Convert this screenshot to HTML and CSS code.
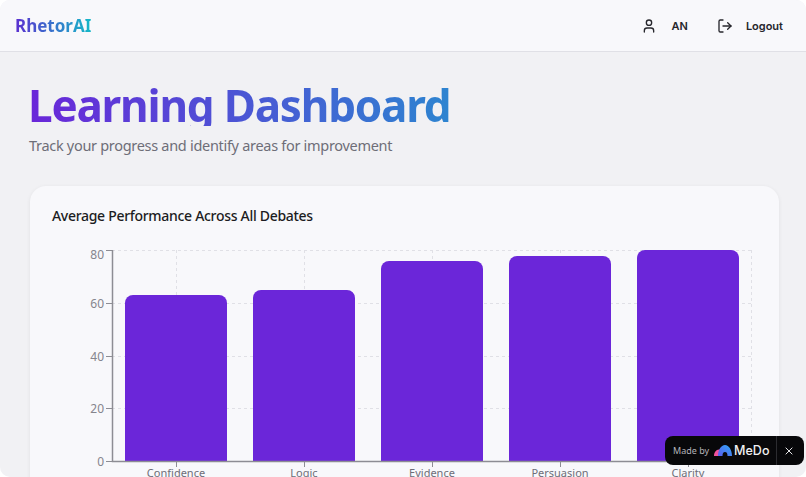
FILE: index.html
```html
<!DOCTYPE html>
<html lang="en">
<head>
  <meta charset="UTF-8" />
  <title>RhetorAI - Learning Dashboard</title>
  <link rel="stylesheet" href="styles.css">
</head>
<body>
  <div class="app">
    <header class="navbar">
      <a class="logo">RhetorAI</a>
      <nav class="nav-actions">
        <div class="nav-item user">
          <svg class="icon" viewBox="0 0 24 24"><circle cx="12" cy="7" r="4"/><path d="M19 21v-2a4 4 0 0 0-4-4H9a4 4 0 0 0-4 4v2"/></svg>
          <span>AN</span>
        </div>
        <div class="nav-item logout">
          <svg class="icon" viewBox="0 0 24 24"><path d="M9 21H5a2 2 0 0 1-2-2V5a2 2 0 0 1 2-2h4"/><path d="m16 17 5-5-5-5"/><path d="M21 12H9"/></svg>
          <span>Logout</span>
        </div>
      </nav>
    </header>

    <main class="content">
      <h1 class="page-title">Learning Dashboard</h1>
      <p class="page-sub">Track your progress and identify areas for improvement</p>

      <section class="card">
        <h2 class="card-title">Average Performance Across All Debates</h2>
        <svg class="chart" viewBox="52 240 705 240" width="705" height="240">
          <g class="grid">
            <path d="M112 250.5H751M112 303.5H751M112 356.5H751M112 408.5H751"/>
            <path d="M176.5 250V461M304.5 250V461M432.5 250V461M560.5 250V461M688.5 250V461M751.5 250V461"/>
          </g>
          <g class="bars">
            <path d="M125 461V303a8 8 0 0 1 8-8h86a8 8 0 0 1 8 8V461z"/>
            <path d="M253 461V298a8 8 0 0 1 8-8h86a8 8 0 0 1 8 8V461z"/>
            <path d="M381 461V269a8 8 0 0 1 8-8h86a8 8 0 0 1 8 8V461z"/>
            <path d="M509 461V264a8 8 0 0 1 8-8h86a8 8 0 0 1 8 8V461z"/>
            <path d="M637 461V258a8 8 0 0 1 8-8h86a8 8 0 0 1 8 8V461z"/>
          </g>
          <g class="axis">
            <path d="M112.500 250V461.500H751"/>
            <path d="M106 250.500H112M106 303.500H112M106 356.500H112M106 408.500H112M106 461.500H112"/>
            <path d="M176.500 462V467M304.500 462V467M432.500 462V467M560.500 462V467M688.500 462V467"/>
          </g>
          <g class="y-labels">
            <text x="104" y="259">80</text>
            <text x="104" y="308">60</text>
            <text x="104" y="361">40</text>
            <text x="104" y="413">20</text>
            <text x="104" y="466">0</text>
          </g>
          <g class="x-labels">
            <text x="176" y="477">Confidence</text>
            <text x="304" y="477">Logic</text>
            <text x="432" y="477">Evidence</text>
            <text x="560" y="477">Persuasion</text>
            <text x="688" y="477">Clarity</text>
          </g>
        </svg>
      </section>
    </main>

    <div class="badge">
      <div class="badge-main">
        <span class="made-by">Made by</span>
        <svg class="medo-mark" viewBox="0 0 18 11">
          <defs>
            <linearGradient id="medoArch" x1="0" y1="1" x2="1" y2="0">
              <stop offset="0" stop-color="#5b5cf0"/>
              <stop offset="1" stop-color="#2ea8f5"/>
            </linearGradient>
          </defs>
          <path class="medo-pink" d="M0 11C0 7.500 2 4.500 5 4.500 6 4.500 7 5 7.500 5.500 6.500 7 6 9 6 11z"/>
          <path fill="url(#medoArch)" d="M4 11C4 5 7 0 11 0 15 0 18 5 18 11H13.500C13.500 8.500 12.800 7 11 7 9.200 7 8.500 8.500 8.500 11z"/>
        </svg>
        <span class="medo-name">MeDo</span>
      </div>
      <button class="badge-close">
        <svg viewBox="0 0 12 12"><path d="M2 2 10 10M10 2 2 10"/></svg>
      </button>
    </div>
  </div>
</body>
</html>
```

FILE: styles.css
```css
* {
  box-sizing: border-box;
}

html, body {
  margin: 0;
  height: 100%;
  overflow: hidden;
  background: #fff;
}

.app {
  position: relative;
  height: 477px;
  overflow: hidden;
  border-radius: 10px;
  background: #f1f1f4;
  font-family: "Noto Sans", sans-serif;
  color: #1c1c22;
}

.navbar {
  display: flex;
  align-items: center;
  justify-content: space-between;
  height: 52px;
  padding: 0 23px 0 15px;
  background: #f8f8fb;
  border-bottom: 1px solid #e0e0e6;
}

.logo {
  font-size: 17px;
  font-weight: 700;
  background: linear-gradient(to right, #5b2fd0, #14b8c8);
  -webkit-background-clip: text;
  background-clip: text;
  color: transparent;
}

.nav-actions {
  display: flex;
  align-items: center;
  gap: 29px;
}

.nav-item {
  display: flex;
  align-items: center;
  gap: 15px;
  font-family: Inter, sans-serif;
  font-size: 11px;
  font-weight: 600;
  color: #26262c;
}

.logout {
  gap: 13px;
}

.icon {
  width: 16px;
  height: 16px;
  fill: none;
  stroke: #26262c;
  stroke-width: 2;
  stroke-linecap: round;
  stroke-linejoin: round;
}

.content {
  padding: 26px 27px 0 30px;
}

/* line-height bigger than the box, the gradient stops at the box so the descender gets cut */
.page-title {
  display: inline-block;
  height: 48px;
  margin: 0 0 0 -2px;
  font-size: 44px;
  line-height: 54px;
  letter-spacing: -1.2px;
  font-weight: 700;
  background: linear-gradient(to right, #6a26d9, #2d84d0);
  -webkit-background-clip: text;
  background-clip: text;
  color: transparent;
}

.page-sub {
  margin: 7px 0 0 -1px;
  font-size: 14.5px;
  line-height: 22px;
  letter-spacing: -0.3px;
  color: #6e6e78;
}

.card {
  height: 320px;
  margin-top: 30px;
  padding: 19px 22px;
  background: #f8f8fb;
  border-radius: 16px;
  box-shadow: 0 1px 4px rgba(0, 0, 0, 0.07);
}

.card-title {
  margin: 0;
  font-size: 14px;
  line-height: 22px;
  letter-spacing: -0.3px;
  font-weight: 500;
  color: #1c1c22;
}

.chart {
  display: block;
  margin-top: 13px;
  overflow: visible;
}

.grid path {
  fill: none;
  stroke: #e0e0e6;
  stroke-dasharray: 3 3;
}

.bars path {
  fill: #6b26d9;
}

.axis path {
  fill: none;
  stroke: #8d8d94;
}

.axis path:first-child {
  stroke-width: 1.5;
}

.y-labels text {
  text-anchor: end;
  font-size: 12px;
  fill: #85858d;
}

.x-labels text {
  text-anchor: middle;
  font-size: 11px;
  fill: #6e6e78;
}

.badge {
  position: absolute;
  right: 2px;
  bottom: 12px;
  display: flex;
  align-items: center;
  width: 139px;
  height: 29px;
  background: #08080a;
  border-radius: 8px;
  color: #fff;
}

.badge-main {
  display: flex;
  align-items: center;
  flex: 1;
  height: 100%;
  padding-left: 8px;
  border-right: 1px solid #2c2c30;
}

.made-by {
  font-size: 9px;
  white-space: nowrap;
  color: #b4b4ba;
  margin-right: 5px;
}

.medo-mark {
  width: 18px;
  height: 11px;
  margin-right: 2px;
}

.medo-pink {
  fill: #f0529c;
}

.medo-name {
  font-family: Inter, sans-serif;
  font-size: 12.5px;
  font-weight: 500;
  color: #f0f0f2;
}

.badge-close {
  display: flex;
  align-items: center;
  justify-content: center;
  width: 27px;
  height: 100%;
  padding: 0 4px 0 0;
  border: none;
  background: none;
}

.badge-close svg {
  width: 10px;
  height: 10px;
  fill: none;
  stroke: #e8e8ea;
  stroke-width: 1.2;
}
```
